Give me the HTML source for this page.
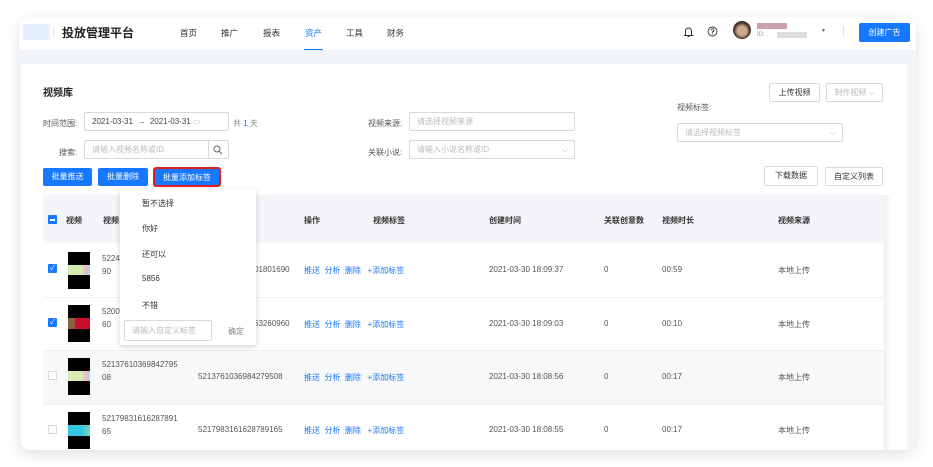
<!DOCTYPE html>
<html><head><meta charset="utf-8"><style>
*{box-sizing:border-box;margin:0;padding:0}
body{width:933px;height:467px;background:#fff;font-family:"Liberation Sans","Noto Sans CJK SC",sans-serif;position:relative;overflow:hidden;color:#333}
.a{position:absolute;white-space:nowrap}
.card{position:absolute;left:19px;top:17px;width:897px;height:433px;background:#f1f4f8;border-radius:12px;box-shadow:0 4px 14px rgba(0,0,0,.12);overflow:hidden}
.hdr{position:absolute;left:0;top:0;width:897px;height:33px;background:#fff}
.panel{position:absolute;left:2px;top:47px;width:886px;height:400px;background:#fff}
.f{font-size:8px;color:#555}
.in{position:absolute;border:1px solid #d9d9d9;border-radius:2px;background:#fff;font-size:8px;color:#bbb;padding-left:7px;line-height:17px;height:19px}
.btn{position:absolute;background:#1677ff;color:#fff;font-size:8px;text-align:center;border-radius:2px;line-height:18px;height:18px}
.wbtn{position:absolute;border:1px solid #d9d9d9;background:#fff;font-size:8px;color:#333;text-align:center;border-radius:2px;line-height:17px;height:19px}
.th{font-size:8px;color:#333;font-weight:bold}
.td{font-size:8px;color:#555}
.lk{font-size:8px;color:#1677ff}
.cb{position:absolute;width:9px;height:9px;border:1px solid #d9d9d9;border-radius:1px;background:#fff}
.cbk{background:#1677ff;border-color:#1677ff}
.thumb{position:absolute;width:22px;height:37px;background:#000}
</style></head><body>
<div class="card">
 <div class="hdr">
  <div class="a" style="left:4px;top:7px;width:27px;height:16px;background:#e3f0fb"></div>
  <div class="a" style="left:34px;top:10px;width:1px;height:10px;background:#ddd"></div>
  <div class="a" style="left:43px;top:7px;font-size:12px;color:#222;font-weight:bold">投放管理平台</div>
  <div class="a f" style="left:161px;top:10px;font-size:8.5px;color:#333">首页</div>
  <div class="a f" style="left:202px;top:10px;font-size:8.5px;color:#333">推广</div>
  <div class="a f" style="left:244px;top:10px;font-size:8.5px;color:#333">报表</div>
  <div class="a f" style="left:286px;top:10px;font-size:8.5px;color:#1677ff">资产</div>
  <div class="a" style="left:285px;top:32px;width:19px;height:1px;background:#1677ff"></div>
  <div class="a f" style="left:327px;top:10px;font-size:8.5px;color:#333">工具</div>
  <div class="a f" style="left:368px;top:10px;font-size:8.5px;color:#333">财务</div>
  <svg class="a" style="left:664px;top:9px" width="11" height="12" viewBox="0 0 11 12"><path d="M2.5 8.5V5a3 3 0 0 1 6 0v3.5l1 1h-8z M4.5 10.5h2" fill="none" stroke="#333" stroke-width="1"/></svg>
  <svg class="a" style="left:688px;top:9px" width="11" height="11" viewBox="0 0 11 11"><circle cx="5.5" cy="5.5" r="4.5" fill="none" stroke="#333" stroke-width=".9"/><path d="M4 4.3a1.5 1.5 0 1 1 1.5 1.5v1" fill="none" stroke="#333" stroke-width=".9"/><circle cx="5.5" cy="8" r=".5" fill="#333"/></svg>
  <div class="a" style="left:714px;top:4px;width:18px;height:18px;border-radius:50%;background:radial-gradient(circle at 50% 55%,#c9a88e 35%,#4a3028 60%)"></div>
  <div class="a" style="left:738px;top:6px;width:30px;height:6px;background:#c9a0ac"></div>
  <div class="a" style="left:738px;top:15px;font-size:6px;color:#999">ID: . .</div>
  <div class="a" style="left:758px;top:15px;width:30px;height:6px;background:#ddd"></div>
  <div class="a" style="left:803px;top:10px;font-size:6px;color:#666">▾</div>
  <div class="a" style="left:824px;top:9px;width:1px;height:10px;background:#ddd"></div>
  <div class="btn" style="left:840px;top:6px;width:51px;height:19px;line-height:19px">创建广告</div>
 </div>
 <div class="panel">
  <div class="a" style="left:22px;top:20px;font-size:10px;font-weight:bold;color:#222">视频库</div>
  <div class="a f" style="left:22px;top:54px">时间范围:</div>
  <div class="in" style="left:63px;top:48px;width:145px;color:#444">2021-03-31 &nbsp;→&nbsp; 2021-03-31 <span style="color:#bbb">▭</span></div>
  <div class="a f" style="left:212px;top:54px;color:#888">共 <span style="color:#1677ff">1</span> 天</div>
  <div class="a f" style="left:38px;top:83px">搜索:</div>
  <div class="in" style="left:63px;top:76px;width:145px">请输入视频名称或ID</div>
  <div class="a" style="left:187px;top:77px;width:1px;height:17px;background:#d9d9d9"></div>
  <svg class="a" style="left:192px;top:81px" width="10" height="10" viewBox="0 0 10 10"><circle cx="4" cy="4" r="3" fill="none" stroke="#666"/><path d="M6.3 6.3 9 9" stroke="#666"/></svg>
  <div class="a f" style="left:347px;top:54px">视频来源:</div>
  <div class="in" style="left:388px;top:48px;width:166px">请选择视频来源</div>
  <div class="a f" style="left:347px;top:83px">关联小说:</div>
  <div class="in" style="left:388px;top:76px;width:166px">请输入小说名称或ID<span style="position:absolute;right:6px;color:#bbb">⌵</span></div>
  <div class="a f" style="left:656px;top:38px">视频标签:</div>
  <div class="in" style="left:656px;top:59px;width:166px">请选择视频标签<span style="position:absolute;right:6px">⌵</span></div>
  <div class="wbtn" style="left:748px;top:19px;width:51px">上传视频</div>
  <div class="wbtn" style="left:805px;top:19px;width:57px;color:#bbb">制作视频 ⌵</div>
  <div class="wbtn" style="left:743px;top:102px;width:54px;height:20px">下载数据</div>
  <div class="wbtn" style="left:804px;top:103px;width:58px">自定义列表</div>
  <div class="btn" style="left:22px;top:104px;width:49px">批量推送</div>
  <div class="btn" style="left:77px;top:104px;width:50px">批量删除</div>
  <div class="btn" style="left:133px;top:104px;width:66px;border:1px solid #e02020;box-shadow:0 0 0 1px #e02020">批量添加标签</div>
  <div class="a" style="left:0;top:-17px;width:886px;height:420px">
  <div class="a" style="left:22px;top:148px;width:841px;height:48px;background:#f3f5f8"></div>
  <div class="a" style="left:22px;top:303px;width:841px;height:54px;background:#f6f8fa"></div>
  <div class="a" style="left:22px;top:250px;width:841px;height:1px;background:#f0f0f0"></div>
  <div class="a" style="left:22px;top:303px;width:841px;height:1px;background:#f0f0f0"></div>
  <div class="a" style="left:22px;top:357px;width:841px;height:1px;background:#f0f0f0"></div>
  <div class="a" style="left:863px;top:148px;width:8px;height:270px;background:linear-gradient(90deg,rgba(0,0,0,.06),rgba(0,0,0,0))"></div>
  <div class="cb cbk" style="left:27px;top:168px"><div style="position:absolute;left:1px;top:3px;width:5px;height:1.5px;background:#fff"></div></div>
  <div class="a th" style="left:45px;top:168px">视频</div>
  <div class="a th" style="left:82px;top:168px">视频</div>
  <div class="a th" style="left:283px;top:168px">操作</div>
  <div class="a th" style="left:352px;top:168px">视频标签</div>
  <div class="a th" style="left:468px;top:168px">创建时间</div>
  <div class="a th" style="left:583px;top:168px">关联创意数</div>
  <div class="a th" style="left:641px;top:168px">视频时长</div>
  <div class="a th" style="left:757px;top:168px">视频来源</div>
  <div class="cb cbk" style="left:27px;top:217px;color:#fff;font-size:7px;line-height:7px;text-align:center">✓</div>
  <div class="cb cbk" style="left:27px;top:271px;color:#fff;font-size:7px;line-height:7px;text-align:center">✓</div>
  <div class="cb" style="left:27px;top:324px"></div>
  <div class="cb" style="left:27px;top:378px"></div>
  <div class="thumb" style="left:47px;top:205px"><div style="margin-top:13px;height:10px;background:linear-gradient(90deg,#d6ecb0 60%,#f1b8c8 80%,#a8dde8)"></div></div>
  <div class="thumb" style="left:47px;top:258px"><div style="margin-top:13px;height:11px;background:linear-gradient(90deg,#8a6040 30%,#c8102e 35%)"></div></div>
  <div class="thumb" style="left:47px;top:311px"><div style="margin-top:13px;height:10px;background:linear-gradient(90deg,#d6ecb0 60%,#f1b8c8 80%,#a8dde8)"></div></div>
  <div class="thumb" style="left:47px;top:365px"><div style="margin-top:13px;height:11px;background:linear-gradient(90deg,#35c7e0 60%,#7ad8b0)"></div></div>
  <div class="a td" style="left:81px;top:205px;line-height:13px">5224<br>90</div>
  <div class="a td" style="left:81px;top:258px;line-height:13px">5200<br>60</div>
  <div class="a td" style="left:81px;top:311px;line-height:13px">52137610369842795<br>08</div>
  <div class="a td" style="left:81px;top:365px;line-height:13px">52179831616287891<br>65</div>
  <div class="a td" style="left:233px;top:218px">01801690</div>
  <div class="a td" style="left:233px;top:272px">63260960</div>
  <div class="a td" style="left:177px;top:325px">5213761036984279508</div>
  <div class="a td" style="left:177px;top:378px">5217983161628789165</div>
  <div class="a lk" style="left:283px;top:218px">推送 &nbsp;分析 &nbsp;删除 &nbsp;&nbsp;+添加标签</div>
  <div class="a lk" style="left:283px;top:272px">推送 &nbsp;分析 &nbsp;删除 &nbsp;&nbsp;+添加标签</div>
  <div class="a lk" style="left:283px;top:325px">推送 &nbsp;分析 &nbsp;删除 &nbsp;&nbsp;+添加标签</div>
  <div class="a lk" style="left:283px;top:378px">推送 &nbsp;分析 &nbsp;删除 &nbsp;&nbsp;+添加标签</div>
  <div class="a td" style="left:468px;top:218px">2021-03-30 18:09:37</div>
  <div class="a td" style="left:468px;top:272px">2021-03-30 18:09:03</div>
  <div class="a td" style="left:468px;top:325px">2021-03-30 18:08:56</div>
  <div class="a td" style="left:468px;top:378px">2021-03-30 18:08:55</div>
  <div class="a td" style="left:583px;top:218px">0</div><div class="a td" style="left:583px;top:272px">0</div><div class="a td" style="left:583px;top:325px">0</div><div class="a td" style="left:583px;top:378px">0</div>
  <div class="a td" style="left:641px;top:218px">00:59</div><div class="a td" style="left:641px;top:272px">00:10</div><div class="a td" style="left:641px;top:325px">00:17</div><div class="a td" style="left:641px;top:378px">00:17</div>
  <div class="a td" style="left:757px;top:218px">本地上传</div><div class="a td" style="left:757px;top:272px">本地上传</div><div class="a td" style="left:757px;top:325px">本地上传</div><div class="a td" style="left:757px;top:378px">本地上传</div>
  <div class="a" style="left:99px;top:142px;width:136px;height:156px;background:#fff;box-shadow:0 2px 6px rgba(0,0,0,.18);border-radius:2px">
   <div class="a td" style="left:22px;top:9px;color:#333">暂不选择</div>
   <div class="a td" style="left:22px;top:34px;color:#333">你好</div>
   <div class="a td" style="left:22px;top:60px;color:#333">还可以</div>
   <div class="a td" style="left:22px;top:85px;color:#333">5856</div>
   <div class="a td" style="left:22px;top:111px;color:#333">不错</div>
   <div class="in" style="left:4px;top:131px;width:88px;height:21px;line-height:19px">请输入自定义标签</div>
   <div class="a td" style="left:108px;top:137px;color:#888">确定</div>
  </div>
  </div>
 </div>
</div>
</body></html>
